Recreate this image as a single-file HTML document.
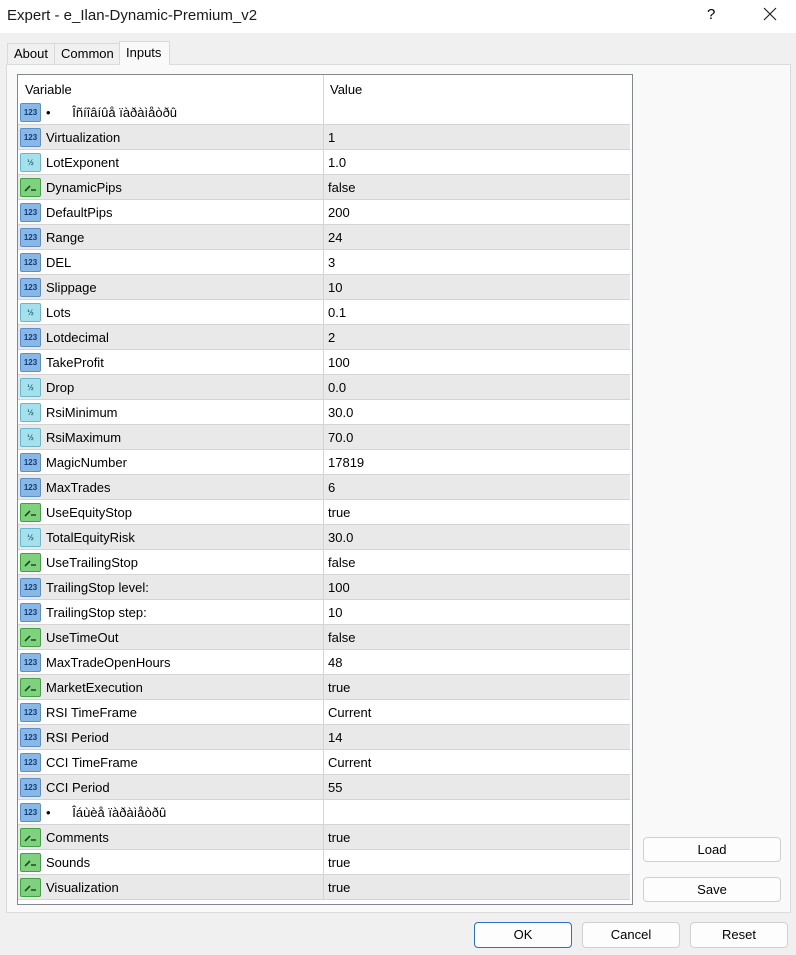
<!DOCTYPE html>
<html><head><meta charset="utf-8"><style>
*{box-sizing:border-box;margin:0;padding:0}
body{width:796px;height:955px;background:#f0f0f0;font-family:"Liberation Sans",Arial,sans-serif;font-size:13px;color:#000;position:relative;overflow:hidden}
.title{position:absolute;left:0;top:0;width:796px;height:33px;background:#fff}
.title .t{position:absolute;left:7px;top:7px;font-size:15px;color:#1a1a1a}
.q{position:absolute;left:707px;top:6px;font-size:15px}
.x{position:absolute;left:762px;top:6px}
.tab{position:absolute;background:#f0f0f0;border:1px solid #d9d9d9;border-bottom:none;font-size:13px;padding-left:6px}
.panel{position:absolute;left:6px;top:64px;width:785px;height:849px;background:#f9f9f9;border:1px solid #dcdcdc}
.tbl{position:absolute;left:17px;top:74px;width:616px;height:831px;background:#fff;border:1px solid #828790}
.hdr{position:absolute;left:0;top:0;width:614px;height:25px;background:#fff}
.hdr span{position:absolute;top:7px}
.row{position:absolute;left:0;width:612px;height:25px;border-bottom:1px solid #d4d4d4}
.row.g{background:#e9e9e9}
.row .n{position:absolute;left:28px;top:5px}
.row .v{position:absolute;left:310px;top:5px}
.sep{position:absolute;left:305px;top:0;width:1px;height:100%;background:#d4d4d4}
.ic{position:absolute;left:2px;top:3px;width:21px;height:19px;border-radius:2px;font-size:8px;font-weight:bold;text-align:center;line-height:17px}
.i1{background:#8ab8e6;border:1px solid #5b8fc9;color:#0d3c78}
.i2{background:#a6e0ec;border:1px solid #67b8cc;color:#1a6d80}
.i3{background:#7fd07f;border:1px solid #3fa43f}
.btn{position:absolute;background:#fdfdfd;border:1px solid #d0d0d0;border-radius:4px;text-align:center;font-size:13px;line-height:23px}
</style></head><body>
<div class="title"><span class="t">Expert - e_Ilan-Dynamic-Premium_v2</span><span class="q">?</span>
<svg class="x" width="16" height="16" viewBox="0 0 16 16"><path d="M2 2L14 14M14 2L2 14" stroke="#222" stroke-width="1.2"/></svg></div>
<div class="tab" style="left:7px;top:43px;width:48px;height:21px;line-height:20px">About</div>
<div class="tab" style="left:54px;top:43px;width:66px;height:21px;line-height:20px">Common</div>
<div class="panel"></div>
<div class="tab" style="left:119px;top:41px;width:51px;height:24px;line-height:21px;background:#f9f9f9;z-index:2">Inputs</div>
<div class="tbl">
<div class="hdr"><span style="left:7px">Variable</span><span style="left:312px">Value</span><div class="sep" style="left:305px"></div></div>
<div id="rows"></div>
<div class="sep" style="top:25px;height:800px"></div>
</div>
<script>
var d=[["1","•&nbsp;&nbsp;&nbsp;&nbsp;&nbsp;&nbsp;Îñíîâíûå ïàðàìåòðû",""],["1","Virtualization","1"],["2","LotExponent","1.0"],["3","DynamicPips","false"],["1","DefaultPips","200"],["1","Range","24"],["1","DEL","3"],["1","Slippage","10"],["2","Lots","0.1"],["1","Lotdecimal","2"],["1","TakeProfit","100"],["2","Drop","0.0"],["2","RsiMinimum","30.0"],["2","RsiMaximum","70.0"],["1","MagicNumber","17819"],["1","MaxTrades","6"],["3","UseEquityStop","true"],["2","TotalEquityRisk","30.0"],["3","UseTrailingStop","false"],["1","TrailingStop level:","100"],["1","TrailingStop step:","10"],["3","UseTimeOut","false"],["1","MaxTradeOpenHours","48"],["3","MarketExecution","true"],["1","RSI TimeFrame","Current"],["1","RSI Period","14"],["1","CCI TimeFrame","Current"],["1","CCI Period","55"],["1","•&nbsp;&nbsp;&nbsp;&nbsp;&nbsp;&nbsp;Îáùèå ïàðàìåòðû",""],["3","Comments","true"],["3","Sounds","true"],["3","Visualization","true"]];
var h="";
for(var i=0;i<d.length;i++){var r=d[i];var ic=r[0]=="1"?'<div class="ic i1">123</div>':r[0]=="2"?'<div class="ic i2">½</div>':'<div class="ic i3"><svg width="19" height="17" viewBox="0 0 19 17"><path d="M4 12L9 7M10 11H15" stroke="#1a4d1a" stroke-width="1.6"/></svg></div>';
h+='<div class="row'+(i%2?' g':'')+'" style="top:'+(25+25*i)+'px">'+ic+'<span class="n">'+r[1]+'</span><span class="v">'+r[2]+'</span></div>';}
document.getElementById("rows").innerHTML=h;
</script>
<div class="btn" style="left:643px;top:837px;width:138px;height:25px">Load</div>
<div class="btn" style="left:643px;top:877px;width:138px;height:25px">Save</div>
<div class="btn" style="left:474px;top:922px;width:98px;height:26px;border-color:#2a6ecf">OK</div>
<div class="btn" style="left:582px;top:922px;width:98px;height:26px">Cancel</div>
<div class="btn" style="left:690px;top:922px;width:98px;height:26px">Reset</div>
</body></html>
